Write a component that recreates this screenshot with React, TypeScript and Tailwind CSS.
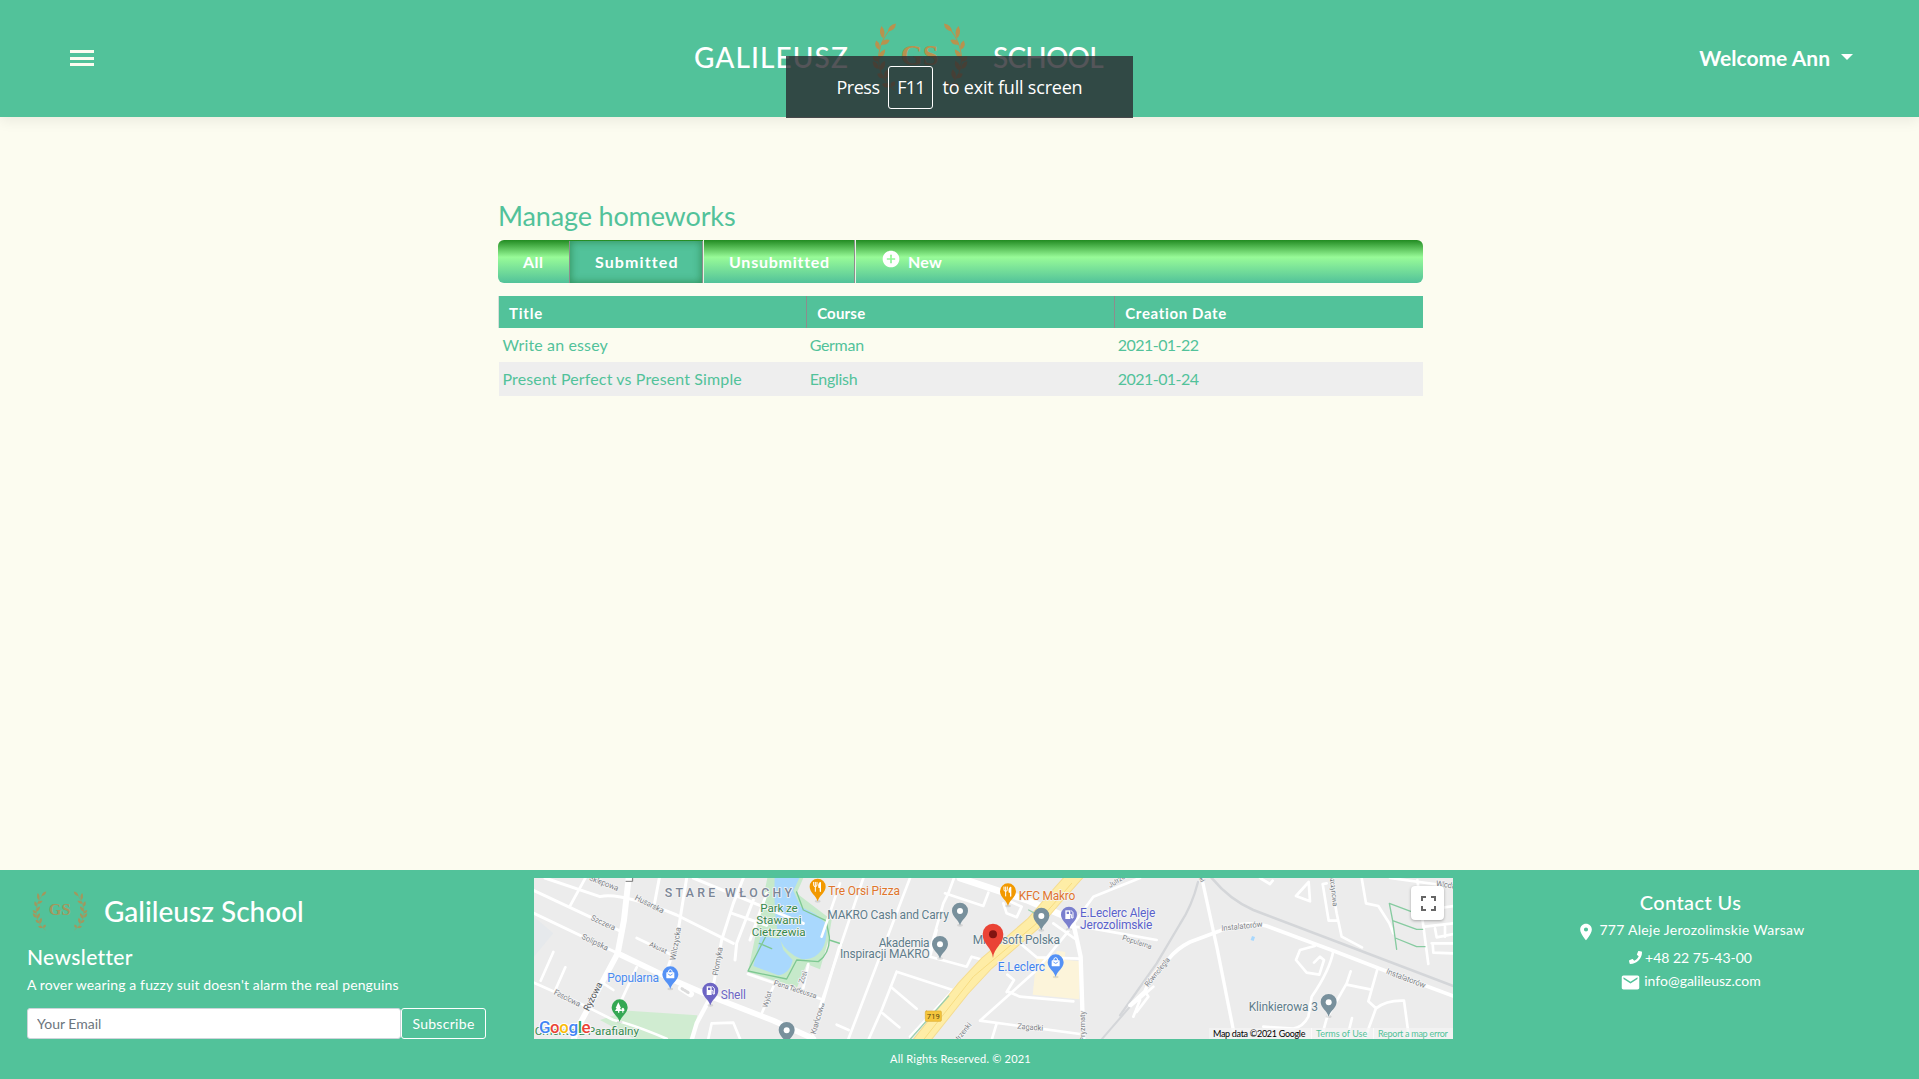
import type { ReactNode } from "react";
import { MdAddCircle, MdEmail, MdLocationOn } from "react-icons/md";
import { FaPhone } from "react-icons/fa";

const leaves: [number, number, number, number][] = [
  [684, 97, -46, 34],
  [669, 118, -98, 38],
  [662, 136, -28, 30],
  [657, 152, -108, 30],
  [655, 180, -56, 36],
  [656, 186, -142, 24],
  [656, 210, -128, 30],
  [660, 216, -66, 34],
  [672, 236, -150, 24],
  [676, 242, -80, 32],
  [690, 262, -165, 26],
  [694, 264, -62, 20],
];

function Branch() {
  return (
    <g>
      <path
        d="M700 78C676 104 660 132 656 165C652 205 664 245 704 274"
        fill="none"
        stroke="currentColor"
        strokeWidth="3"
      />
      {leaves.map(([x, y, a, l]) => (
        <path
          key={`${x}-${y}`}
          d={`M0 0Q${l * 0.45} -14 ${l} 0Q${l * 0.55} 13 0 0Z`}
          transform={`translate(${x} ${y}) rotate(${a})`}
          fill="currentColor"
        />
      ))}
    </g>
  );
}

function Laurel({ className }: { className: string }) {
  return (
    <svg viewBox="630 65 300 220" className={className}>
      <Branch />
      <g transform="translate(1560 0) scale(-1 1)">
        <Branch />
      </g>
      <text
        x="779"
        y="197"
        textAnchor="middle"
        fontSize="86"
        fontWeight="700"
        fill="currentColor"
        fontFamily="Liberation Serif, serif"
      >
        GS
      </text>
    </svg>
  );
}

function Pin({ x, y, color, children }: { x: number; y: number; color: string; children?: ReactNode }) {
  return (
    <g transform={`translate(${x} ${y})`}>
      <ellipse cx="0" cy="0" rx="9" ry="4" fill="#000" opacity=".1" />
      <path d="M0 0C-4 -17 -24 -26 -24 -44A24 24 0 1 1 24 -44C24 -26 4 -17 0 0Z" fill={color} />
      {children ?? <circle cx="0" cy="-43" r="9" fill="#fff" />}
    </g>
  );
}

const Food = () => (
  <g stroke="#fff" fill="none" strokeWidth="4">
    <path d="M-7 -30V-44M-12 -57V-49Q-12 -44 -7 -44Q-2 -44 -2 -49V-57M-7 -57V-46" strokeWidth="3" />
    <path d="M8 -30V-56Q2 -52 4 -42H8" fill="#fff" />
  </g>
);
const Bag = () => (
  <g>
    <rect x="-12" y="-50" width="24" height="18" rx="2" fill="#fff" />
    <path d="M-6 -50Q-6 -58 0 -58Q6 -58 6 -50" fill="none" stroke="#fff" strokeWidth="3" />
    <path d="M-6 -45Q0 -36 6 -45" fill="none" stroke="#5491f5" strokeWidth="3" />
  </g>
);
const Pump = ({ color }: { color: string }) => (
  <g>
    <path d="M-11 -31V-57H4V-31Z" fill="#fff" />
    <path d="M4 -44H8V-34H12V-50L7 -56" fill="none" stroke="#fff" strokeWidth="3" />
    <rect x="-7" y="-53" width="7" height="7" fill={color} />
  </g>
);
const Tree = () => (
  <path d="M-5 -28V-33H-14L-9 -42H-12L-4 -59L4 -42H1L6 -33H-1V-28ZM8 -28V-33H5Q4 -42 9 -43Q15 -42 14 -33H11V-28Z" fill="#fff" />
);

type Label = { t: string; x: number; y: number; w: number; r?: number; s?: number; c?: string };

function Labels({ items }: { items: Label[] }) {
  return (
    <>
      {items.map((l) => (
        <text
          key={`${l.t}${l.x}`}
          transform={`translate(${l.x} ${l.y}) rotate(${l.r ?? 0})`}
          fontSize={l.s ?? 24}
          textLength={l.w}
          fill={l.c ?? "#7d8287"}
          stroke="#f4f4f4"
          strokeWidth="5"
          strokeLinejoin="round"
          paintOrder="stroke"
        >
          {l.t}
        </text>
      ))}
    </>
  );
}

const slate = "#5f7d8b";
const westLabels: Label[] = [
  { t: "Sklepowa", x: 206, y: 60, w: 92, r: 21 },
  { t: "Husarska", x: 343, y: 118, w: 94, r: 27 },
  { t: "Szczera", x: 211, y: 179, w: 78, r: 25 },
  { t: "Solipska", x: 183, y: 235, w: 86, r: 26 },
  { t: "Akurat", x: 386, y: 258, w: 56, r: 24, s: 21 },
  { t: "Wilczycka", x: 466, y: 302, w: 100, r: -80 },
  { t: "Płomyka", x: 593, y: 348, w: 86, r: -80 },
  { t: "Fasolowa", x: 100, y: 402, w: 86, r: 27 },
  { t: "Ryżowa", x: 206, y: 455, w: 92, r: -63, s: 28, c: "#55595d" },
  { t: "Pana Tadeusza", x: 760, y: 374, w: 134, r: 18, s: 22 },
  { t: "Zosi", x: 850, y: 372, w: 38, r: -72, s: 22 },
  { t: "Wylot", x: 742, y: 444, w: 50, r: -74, s: 22 },
  { t: "Krańcowa", x: 887, y: 524, w: 98, r: -74 },
  { t: "Park ze", x: 721, y: 156, w: 112, s: 35, c: "#36894d" },
  { t: "Stawami", x: 709, y: 192, w: 136, s: 35, c: "#36894d" },
  { t: "Cietrzewia", x: 695, y: 227, w: 162, s: 35, c: "#36894d" },
  { t: "Popularna", x: 262, y: 367, w: 155, s: 36, c: "#4b8bf0" },
  { t: "Shell", x: 602, y: 417, w: 76, s: 36, c: "#6d65c4" },
  { t: "Cmentarz Parafialny", x: 44, y: 526, w: 313, s: 35, c: "#36894d" },
  { t: "Stare Włochy", x: 78, y: 560, w: 190, s: 34, c: "#36894d" },
];
const midLabels: Label[] = [
  { t: "Tre Orsi Pizza", x: 25, y: 105, w: 215, s: 36, c: "#e0762c" },
  { t: "KFC Makro", x: 596, y: 120, w: 170, s: 36, c: "#e0762c" },
  { t: "MAKRO Cash and Carry", x: 22, y: 178, w: 365, s: 36, c: slate },
  { t: "Akademia", x: 176, y: 260, w: 153, s: 36, c: slate },
  { t: "Inspiracji MAKRO", x: 60, y: 295, w: 269, s: 36, c: slate },
  { t: "Microsoft Polska", x: 458, y: 252, w: 262, s: 36, c: slate },
  { t: "E.Leclerc", x: 533, y: 333, w: 142, s: 36, c: "#3f82ee" },
  { t: "E.Leclerc Aleje", x: 780, y: 172, w: 226, s: 36, c: "#5a62cc" },
  { t: "Jerozolimskie", x: 780, y: 207, w: 217, s: 36, c: "#5a62cc" },
  { t: "Jutrzenki", x: 870, y: 84, w: 82, r: -32, s: 22 },
  { t: "Jutrzenki", x: 402, y: 560, w: 84, r: -50, s: 22 },
  { t: "Zagadki", x: 591, y: 506, w: 78, r: 5 },
  { t: "Pryzmaty", x: 796, y: 545, w: 92, r: -90, s: 22 },
  { t: "Popularna", x: 905, y: 239, w: 92, r: 18, s: 22 },
];
const eastLabels: Label[] = [
  { t: "Instalatorów", x: 305, y: 213, w: 124, r: -6 },
  { t: "Instalatorów", x: 797, y: 340, w: 124, r: 21 },
  { t: "Równoległa", x: 84, y: 382, w: 106, r: -51, s: 22 },
  { t: "Łuki", x: 228, y: 38, w: 34, r: 65, s: 22 },
  { t: "Pszczynowa", x: 628, y: 36, w: 104, r: 84, s: 22 },
  { t: "Włodarzewska", x: 947, y: 78, w: 134, r: 8, s: 24 },
  { t: "Klinkierowa 3", x: 386, y: 452, w: 208, s: 36, c: slate },
];

function MapCanvas() {
  return (
    <svg
      viewBox="0 0 919 161"
      className="block h-[161px] w-[919px] bg-[#ececec]"
      fontFamily="Roboto, sans-serif"
      strokeLinecap="round"
      strokeLinejoin="round"
    >
      <g transform="translate(-14 -18) scale(.33333)">
        <path d="M42 170L100 220L42 290Z" fill="#e6e9ec" />
        <path d="M325 452L532 466L514 540H350L240 480Z" fill="#d0ecd1" />
        <path d="M742 54H850L830 100L935 180L925 240L900 328L860 312L830 385L684 335Z" fill="#c6e9ca" />
        <path d="M764 54H838L820 92L842 140L886 162L918 190Q924 240 905 270Q880 304 842 296Q800 280 780 240Q760 180 764 54Z" fill="#a9d8fd" />
        <path d="M722 228L780 236L790 270L818 300Q810 340 775 346L700 318Z" fill="#a9d8fd" />
        <path d="M684 333L800 357L830 300L895 305Q930 280 928 230L918 182L850 150L830 96M718 250L755 266M928 240L965 252M684 333L740 224" fill="none" stroke="#7ec892" strokeWidth="4" />
        <g fill="none" stroke="#fff" strokeWidth="9">
          <path d="M42 92L298 212M42 160L285 276M75 54L240 110Q300 95 470 165L640 250M418 54L404 128M500 54L470 240L445 320M670 54L640 130L605 240L574 410M520 54L850 190M636 160L740 196M740 100L690 240M700 120L650 250L645 300" />
          <path d="M42 368L180 430L280 480Q330 490 440 536M350 322L300 430M100 276L62 362M136 322L106 390M350 234L450 282M196 54L150 138M250 370L280 390" strokeWidth="8" />
          <path d="M684 342L905 418M760 380L726 458M958 260L875 540M850 384L865 312M565 536L575 490L640 488L660 536M960 70L905 230" strokeWidth="8" />
        </g>
        <path d="M326 54L312 180L293 280" fill="none" stroke="#fff" strokeWidth="18" />
        <path d="M293 280L175 500L160 540M293 280L460 360L580 412L760 482L880 536" fill="none" stroke="#fff" strokeWidth="17" />
        <path d="M570 415L530 490L515 540" fill="none" stroke="#fff" strokeWidth="13" />
        <path d="M484 384L512 402" stroke="#fff" strokeWidth="20" />
        <path d="M486 386L508 400" stroke="#dcdcdc" strokeWidth="9" strokeDasharray="4 5" />
        <path d="M318 64H338V50" fill="none" stroke="#777" strokeWidth="3" />
        <Labels items={westLabels} />
        <text
          x="434"
          y="110"
          fontSize="37"
          fontWeight="500"
          textLength="382"
          fill="#7b8697"
          stroke="#f4f4f4"
          strokeWidth="5"
          paintOrder="stroke"
        >
          STARE WŁOCHY
        </text>
      </g>

      <g transform="translate(286 -18) scale(.33333)">
        <path d="M650 292L778 304V418L638 404ZM710 272L736 276L734 300L708 298Z" fill="#fcf4da" />
        <g fill="none" stroke="#fff" strokeWidth="8">
          <path d="M130 54L0 440M270 54L84 540M402 54L385 100L370 130L330 270M375 100L490 138L505 98M350 210L330 290L440 320L455 290L490 300M230 335L185 450L145 540M230 335L398 390M212 380L290 446M188 460L238 502M50 494L86 510M550 130L560 160L590 172L605 140L560 120" />
          <path d="M484 300L270 530M600 250L650 292L780 296M480 482L650 330L740 220L820 110L960 54M480 482L780 522M530 490L515 540M565 395L600 410L760 424M560 396L582 360L562 344M700 190L770 240L760 200L820 206L1010 240" />
          <path d="M1000 380L930 440M960 420L940 470" />
        </g>
        <path d="M420 54L620 120L760 180" fill="none" stroke="#fff" strokeWidth="20" />
        <path d="M758 180L782 290L790 540" fill="none" stroke="#fff" strokeWidth="13" />
        <path d="M775 36L700 120L640 190L500 310L430 385L290 560" fill="none" stroke="#f5dc90" strokeWidth="46" />
        <path d="M775 36L700 120L640 190L500 310L430 385L290 560" fill="none" stroke="#feeda6" strokeWidth="40" />
        <path d="M755 70L650 190L460 350L310 540" fill="none" stroke="#f7dc82" strokeWidth="3" />
        <path d="M386 408L272 536M626 150L645 160" stroke="#9ccfae" strokeWidth="4" />
        <path d="M845 538L930 440" fill="none" stroke="#d4d6d9" strokeWidth="6" />
        <rect x="316" y="453" width="48" height="31" rx="3" fill="#f5c63d" stroke="#dcaa2f" strokeWidth="2" />
        <text x="340" y="477" fontSize="23" textAnchor="middle" fill="#5c4a10">719</text>
        <Labels items={midLabels} />
      </g>

      <g transform="translate(586 -18) scale(.33333)">
        <g fill="none" stroke="#d4d6d9">
          <path d="M234 66Q215 140 180 192L110 310L0 466" strokeWidth="7" />
          <path d="M275 54Q330 120 400 150L700 264L1000 378" strokeWidth="8" />
        </g>
        <path d="M30 436L75 394Q90 345 145 298Q170 266 210 246L296 214Q370 180 440 198L640 272L780 326L1000 408" fill="none" stroke="#fff" strokeWidth="11" />
        <path d="M248 66L292 268L346 540" fill="none" stroke="#fff" strokeWidth="10" />
        <g fill="none" stroke="#fff" strokeWidth="8">
          <path d="M75 394L85 410L50 456M640 272Q630 330 575 410L565 470Q550 500 520 506L430 500M584 258L540 270L528 300L560 338L598 344L612 300L600 290L582 308M772 328L745 424L768 445L735 535M768 445Q800 420 852 422L868 540M692 334L680 370L620 476L605 530M680 374L750 388M696 474L680 540" />
          <path d="M632 54L650 160L665 230L726 262M620 70L608 72L626 182L655 182M566 66L528 108L570 124L566 66M420 54L450 72L458 62M725 54L738 130L775 138L808 190L820 220" />
          <path d="M810 54L1000 80M892 60L905 160L925 312M920 150L1000 138M915 200L1000 190M945 205L950 232L1000 222M935 250H1000M938 250L940 278L1000 280M975 200V230" />
        </g>
        <path d="M808 130L872 154M808 130L818 182L830 268M818 182L890 208H908M826 234L890 260L915 260" fill="none" stroke="#86cba0" strokeWidth="4" />
        <path d="M396 228L405 231L401 243L392 240Z" fill="#a9d8fd" />
        <Labels items={eastLabels} />
        <Pin x={626} y={470} color="#78909c" />
      </g>

      <g transform="translate(-14 -18) scale(.33333)">
        <Pin x={451} y={387} color="#5491f5"><Bag /></Pin>
        <Pin x={571} y={436} color="#6d65c4"><Pump color="#6d65c4" /></Pin>
        <Pin x={299} y={486} color="#34a853"><Tree /></Pin>
        <Pin x={800} y={554} color="#78909c" />
        <Pin x={893} y={124} color="#f29900"><Food /></Pin>
        <text x="57" y="520" fontSize="51" fontWeight="500" textLength="155" stroke="#fff" strokeWidth="6" paintOrder="stroke">
          <tspan fill="#4285f4">G</tspan>
          <tspan fill="#ea4335">o</tspan>
          <tspan fill="#fbbc05">o</tspan>
          <tspan fill="#4285f4">g</tspan>
          <tspan fill="#34a853">l</tspan>
          <tspan fill="#ea4335">e</tspan>
        </text>
      </g>
      <g transform="translate(286 -18) scale(.33333)">
        <Pin x={564} y={138} color="#f29900"><Food /></Pin>
        <Pin x={420} y={196} color="#78909c" />
        <Pin x={360} y={296} color="#78909c" />
        <Pin x={664} y={211} color="#78909c" />
        <Pin x={747} y={208} color="#7a7fce"><Pump color="#7a7fce" /></Pin>
        <Pin x={707} y={351} color="#5491f5"><Bag /></Pin>
        <path d="M519 294C516 262 488 254 488 222A31 31 0 1 1 550 222C550 254 522 262 519 294Z" fill="#ea4335" />
        <circle cx="519" cy="223" r="12" fill="#811411" />
      </g>
    </svg>
  );
}

function Header() {
  return (
    <header className="relative z-10 grid h-[117px] grid-cols-[694px_410px_1fr] items-center bg-[#52c29a] text-white shadow-[0_4px_13px_rgba(0,0,0,0.07)]">
      <button aria-label="Menu" className="mb-px ml-[70px] flex h-4 w-6 flex-col justify-between">
        <span className="h-[3px] w-6 bg-[#fcfcf0]" />
        <span className="h-[3px] w-6 bg-[#fcfcf0]" />
        <span className="h-[3px] w-6 bg-[#fcfcf0]" />
      </button>
      <div className="flex items-center text-[28px] font-medium leading-[34px]">
        <span className="mb-[3px] w-[176px] tracking-[1.1px]">GALILEUSZ</span>
        <Laurel className="mb-[2px] h-[73px] w-[100px] shrink-0 text-[#b8924e]" />
        <span className="mb-[3px] ml-[23px] w-[111px] tracking-[-0.8px]">SCHOOL</span>
      </div>
      <button className="mr-[66px] flex items-center justify-end gap-[11px] text-[21px] font-bold leading-[26px]">
        <span className="mb-px">Welcome Ann</span>
        <span className="mb-[3px] border-x-[6px] border-t-[6px] border-x-transparent border-t-white" />
      </button>
      <div className="absolute left-[786px] top-[56px] flex h-[62px] w-[347px] items-center justify-center gap-[9px] border-b border-black/10 bg-[#292b30]/80 pt-[2px] font-['Open_Sans'] text-[18px]">
        <span className="tracking-[-0.5px]">Press</span>
        <kbd className="flex h-[43px] w-[45px] items-center justify-center rounded-[3px] border border-white font-['Open_Sans'] text-[18px] tracking-[-0.8px]">
          F11
        </kbd>
        <span className="tracking-[-0.2px]">to exit full screen</span>
      </div>
    </header>
  );
}

const rows = [
  { title: "Write an essey", course: "German", date: "2021-01-22" },
  { title: "Present Perfect vs Present Simple", course: "English", date: "2021-01-24" },
];

function Homeworks() {
  return (
    <main className="ml-[498px] h-[753px] w-[925px] pt-[82px] text-[#52c29a]">
      <h1 className="mb-[7px] text-[27px] leading-[34px] tracking-[-0.15px]">Manage homeworks</h1>
      <nav className="flex h-[43px] overflow-hidden rounded-md bg-[linear-gradient(to_bottom,#228b22_0%,#98fb98_40%,#52c29a_100%)] text-[16px] font-bold leading-[44px] text-white">
        <a className="w-[71px] pl-[25px] tracking-[0.5px]">All</a>
        <a className="mt-px w-[134px] border-x border-[#8d8d8d] bg-[#52c29a] pl-[25px] leading-[42px] tracking-[1.1px] shadow-[inset_0_0_8px_rgba(34,120,60,0.75)]">
          Submitted
        </a>
        <a className="w-[152px] border-l border-r border-l-[#e4f4e0] border-r-[#8d8d8d] pl-[25px] tracking-[0.75px]">
          Unsubmitted
        </a>
        <a className="flex border-l border-[#e4f4e0] pl-[25px]">
          <MdAddCircle className="mr-[7px] mt-[9px] size-5" />
          <span className="tracking-[0.25px]">New</span>
        </a>
      </nav>
      <table className="mt-[13px] w-full table-fixed border-collapse text-left">
        <thead>
          <tr className="h-8 bg-[#52c29a] text-[15px] leading-[30px] text-white">
            <th className="border-l border-[#d8dfd8] p-0 pl-[10px] pt-[2px] tracking-[0.8px]">Title</th>
            <th className="border-l border-[#8d8d8d] p-0 pl-[10px] pt-[2px] tracking-[0.2px]">Course</th>
            <th className="border-l border-[#8d8d8d] p-0 pl-[10px] pt-[2px] tracking-[0.65px]">Creation Date</th>
          </tr>
        </thead>
        <tbody>
          {rows.map((r) => (
            <tr key={r.title} className="h-[34px] text-[16px] leading-[34px] even:bg-[#eeeeee]">
              <td className="p-0 pl-1 tracking-[0.13px]">{r.title}</td>
              <td className="p-0 pl-[3px] tracking-[-0.3px]">{r.course}</td>
              <td className="p-0 pl-[3px] tracking-[-0.55px]">{r.date}</td>
            </tr>
          ))}
        </tbody>
      </table>
    </main>
  );
}

function Footer() {
  return (
    <footer className="h-[209px] bg-[#52c29a] text-white">
      <div className="grid h-[169px] grid-cols-[534px_919px_1fr]">
        <section className="pl-[27px] pt-5">
          <div className="flex h-[42px] items-center gap-[15px] pl-1">
            <Laurel className="h-[42px] w-[58px] text-[#a3975d]" />
            <h2 className="mb-px text-[28px] font-medium leading-[34px]">Galileusz School</h2>
          </div>
          <h3 className="mt-[11px] text-[21px] font-medium leading-7 tracking-[0.35px]">Newsletter</h3>
          <p className="mt-1 text-[14px] leading-5 tracking-[0.14px]">
            A rover wearing a fuzzy suit doesn't alarm the real penguins
          </p>
          <form className="mt-[13px] flex h-[31px] text-[14px]">
            <input
              placeholder="Your Email"
              className="w-[374px] rounded-[3px] border border-[#ced4da] bg-white px-[9px] text-[14px] placeholder:text-[#6c757d]"
            />
            <button type="button" className="w-[85px] rounded-[3px] border border-white tracking-[0.3px]">
              Subscribe
            </button>
          </form>
        </section>
        <section className="relative mt-2 h-[161px] overflow-hidden">
          <MapCanvas />
          <button
            aria-label="Toggle fullscreen view"
            className="absolute right-[9px] top-2 flex h-[34px] w-[33px] items-center justify-center rounded-sm bg-white pl-px shadow-[0_1px_3px_rgba(0,0,0,0.3)]"
          >
            <svg viewBox="0 0 15 15" className="size-[15px]" fill="none" stroke="#666" strokeWidth="2">
              <path d="M1 5V1H5M10 1H14V5M14 10V14H10M5 14H1V10" />
            </svg>
          </button>
          <div className="absolute bottom-0 right-0 flex h-[11px] w-[244px] bg-[#f5f5f5]/70 text-[9px] leading-[11px]">
            <span className="w-[102px] whitespace-nowrap pl-[4px] tracking-[-0.3px] text-black">Map data ©2021 Google</span>
            <span className="w-[62px] whitespace-nowrap border-l border-white/60 pl-[4px] text-[#52c29a]">Terms of Use</span>
            <span className="whitespace-nowrap border-l border-white/60 pl-[4px] tracking-[-0.28px] text-[#52c29a]">Report a map error</span>
          </div>
        </section>
        <section className="flex flex-col items-center pl-[9px] pt-5 text-[14px]">
          <h3 className="mb-px text-[20px] font-medium leading-6 tracking-[0.4px]">Contact Us</h3>
          <p className="flex h-7 items-center gap-[3px] tracking-[0.29px]">
            <MdLocationOn className="mt-[6px] size-5" />
            777 Aleje Jerozolimskie Warsaw
          </p>
          <p className="flex h-7 items-center gap-[3px]">
            <FaPhone className="mt-px size-[13px]" />
            +48 22 75-43-00
          </p>
          <p className="flex h-[18px] items-center gap-[3px]">
            <MdEmail className="mt-[4px] size-[21px]" />
            info@galileusz.com
          </p>
        </section>
      </div>
      <p className="mt-[10px] pl-[2px] text-center text-[11px] leading-5 tracking-[0.2px]">All Rights Reserved. © 2021</p>
    </footer>
  );
}

export default function App() {
  return (
    <div className="h-[1079px] w-[1919px] overflow-hidden bg-[#fcfcf0] font-['Lato',sans-serif]">
      <Header />
      <Homeworks />
      <Footer />
    </div>
  );
}
